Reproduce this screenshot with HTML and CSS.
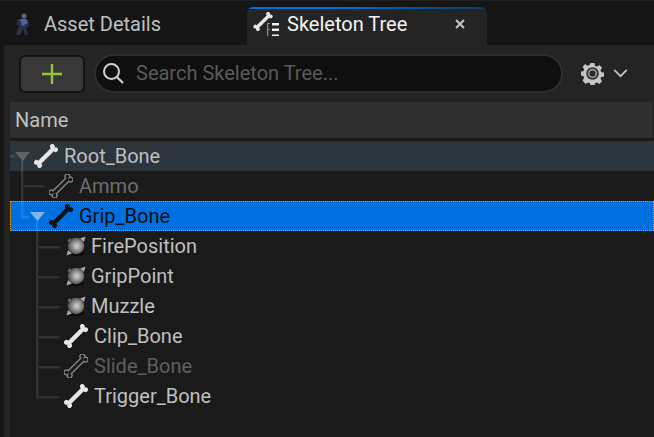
FILE: index.html
```html
<!DOCTYPE html>
<html lang="en">
<head>
<meta charset="utf-8">
<title>Skeleton Tree</title>
<link rel="stylesheet" href="styles.css">
</head>
<body>
<svg class="defs" width="0" height="0" aria-hidden="true">
  <defs>
    <path id="bone" transform="translate(12 12) rotate(-45)" d="M-8.900 -2.200H8.900A2.400 2.400 0 1 1 11.985 0A2.400 2.400 0 1 1 8.900 2.200H-8.900A2.400 2.400 0 1 1 -11.985 0A2.400 2.400 0 1 1 -8.900 -2.200Z"/>
    <radialGradient id="orb" cx="0.550" cy="0.500" r="0.550">
      <stop offset="0" stop-color="#d4d4d4"/>
      <stop offset="0.400" stop-color="#a0a0a0"/>
      <stop offset="0.800" stop-color="#666"/>
      <stop offset="1" stop-color="#484848"/>
    </radialGradient>
    <g id="socket">
      <ellipse cx="10" cy="17.500" rx="8.500" ry="2.500" fill="#0c0c0c"/>
      <circle cx="10" cy="10" r="8.200" fill="url(#orb)"/>
      <path d="M14 2.500l5.500-2-1.500 5.500zM6 17.500l-5.500 2 1.500-5.500z" fill="#a8a8a8"/>
      <path d="M1.500 5l2.500-3 1 2-2 2z" fill="#707070"/>
    </g>
  </defs>
</svg>
<main class="app">
  <nav class="tabs">
    <div class="tab">
      <svg class="tab-figure" viewBox="0 0 16 24" width="16" height="24">
        <circle cx="9" cy="4" r="2.500" fill="#55678f"/>
        <path d="M3 7h10l1 7-3 2 2 7h-3l-2-6-3 6H1l3-10-3-1z" fill="#2b3247"/>
        <path d="M5 7h6l2 4-6 3z" fill="#4a64a4"/>
      </svg>
      <span>Asset Details</span>
    </div>
    <div class="tab tab-active">
      <svg class="tab-bone" viewBox="0 0 27 24" width="27" height="24">
        <use href="#bone" fill="#e6e6e6" transform="translate(.4 -.1) scale(.8)"/>
        <path d="M14 11h1.200v14H14zM14 11h3v1h-3zM14 17h3v1h-3zM14 24h3v1h-3z" fill="#8a8a8a"/>
        <path d="M19 11h7v2.500h-7zM19 16.500h7v2.500h-7zM19 22.500h7v2.500h-7z" fill="#f0f0f0"/>
      </svg>
      <span class="tab-title">Skeleton Tree</span>
      <svg class="tab-close" viewBox="0 0 12 12" width="12" height="12">
        <path d="M2 2l8 8M10 2l-8 8" stroke="#c4c4c4" stroke-width="2" fill="none"/>
      </svg>
    </div>
  </nav>
  <section class="panel">
    <div class="toolbar">
      <button class="add" type="button" aria-label="Add">
        <svg viewBox="0 0 20 20" width="20" height="20"><path d="M10 0v20M0 10h20" stroke="#8fc73e" stroke-width="2.400"/></svg>
      </button>
      <div class="search">
        <svg viewBox="0 0 24 24" width="24" height="24">
          <circle cx="10.500" cy="10.500" r="7.500" stroke="#d0d0d0" stroke-width="2" fill="none"/>
          <path d="M16 16l6 6" stroke="#d0d0d0" stroke-width="2.200"/>
        </svg>
        <span>Search Skeleton Tree...</span>
      </div>
      <div class="settings">
        <svg viewBox="0 0 24 24" width="23" height="23">
          <path d="M10 1h4l.6 3 2 .9 2.600-1.700 2.800 2.800-1.700 2.600.9 2 2.800.4v4l-2.800.6-.9 2 1.700 2.600-2.800 2.800-2.600-1.700-2 .9-.6 2.800h-4l-.6-2.800-2-.9-2.600 1.700L1.600 19.200l1.700-2.600-.9-2-2.400-.6v-4l2.400-.4.900-2-1.700-2.600 2.800-2.800 2.600 1.700 2-.9z" fill="#c4c4c4"/>
          <circle cx="12" cy="12" r="6.500" fill="#2a2a2a"/>
          <circle cx="12" cy="12" r="4" fill="none" stroke="#9a9a9a" stroke-width="1.800"/>
        </svg>
        <svg viewBox="0 0 16 10" width="15" height="9"><path d="M1 1l7 7 7-7" stroke="#c4c4c4" stroke-width="2" fill="none"/></svg>
      </div>
    </div>
    <header class="col-head">Name</header>
    <div class="tree">
      <svg class="wires" width="644" height="290" viewBox="0 0 644 290">
        <g fill="#fff" fill-opacity=".11">
          <rect x="0" y="17" width="5" height="2.500"/>
          <rect x="11" y="22" width="2.500" height="58.500"/>
          <rect x="13.500" y="47" width="21" height="2.500"/>
          <rect x="13.500" y="78" width="6" height="2.500"/>
          <rect x="26" y="83" width="2.500" height="177.500"/>
          <rect x="28.500" y="108" width="21" height="2.500"/>
          <rect x="28.500" y="138" width="21" height="2.500"/>
          <rect x="28.500" y="168" width="21" height="2.500"/>
          <rect x="28.500" y="198" width="21" height="2.500"/>
          <rect x="28.500" y="228" width="21" height="2.500"/>
          <rect x="28.500" y="258" width="21" height="2.500"/>
        </g>
      </svg>
      <div class="row row-root">
        <svg class="caret" viewBox="0 0 15 9" width="15" height="9"><path d="M0 0h15l-7.500 9z"/></svg>
        <svg class="bone" viewBox="0 0 24 24" width="24" height="24"><use href="#bone"/></svg>
        <span>Root_Bone</span>
      </div>
      <div class="row row-l1 muted">
        <svg class="bone outline" viewBox="0 0 24 24" width="24" height="24"><use href="#bone"/></svg>
        <span>Ammo</span>
      </div>
      <div class="row row-selected selected">
        <svg class="caret" viewBox="0 0 15 9" width="15" height="9"><path d="M0 0h15l-7.500 9z"/></svg>
        <svg class="bone" viewBox="0 0 24 24" width="24" height="24"><use href="#bone"/></svg>
        <span>Grip_Bone</span>
      </div>
      <div class="row row-socket">
        <svg class="socket" viewBox="0 0 20 20" width="20" height="20"><use href="#socket"/></svg>
        <span>FirePosition</span>
      </div>
      <div class="row row-socket">
        <svg class="socket" viewBox="0 0 20 20" width="20" height="20"><use href="#socket"/></svg>
        <span>GripPoint</span>
      </div>
      <div class="row row-socket">
        <svg class="socket" viewBox="0 0 20 20" width="20" height="20"><use href="#socket"/></svg>
        <span>Muzzle</span>
      </div>
      <div class="row row-l2">
        <svg class="bone" viewBox="0 0 24 24" width="24" height="24"><use href="#bone"/></svg>
        <span>Clip_Bone</span>
      </div>
      <div class="row row-l2 muted">
        <svg class="bone outline" viewBox="0 0 24 24" width="24" height="24"><use href="#bone"/></svg>
        <span>Slide_Bone</span>
      </div>
      <div class="row row-l2">
        <svg class="bone" viewBox="0 0 24 24" width="24" height="24"><use href="#bone"/></svg>
        <span>Trigger_Bone</span>
      </div>
    </div>
  </section>
</main>
</body>
</html>
```
FILE: styles.css
```css
* { box-sizing: border-box; }
html, body { margin: 0; height: 100%; }
body {
  background: #151515;
  font-family: Roboto, "Liberation Sans", sans-serif;
  overflow: hidden;
}
.defs { position: absolute; }
.app {
  width: 654px;
  height: 437px;
  display: flex;
  flex-direction: column;
  padding-top: 6px;
  border-top: 1px solid #202020;
}
.tabs {
  height: 38px;
  display: flex;
  flex: none;
}
.tab {
  width: 247px;
  display: flex;
  align-items: center;
  padding: 0 0 4px 15px;
  gap: 13px;
  font-size: 20px;
  color: #c0c0c0;
}
.tab-active {
  width: 240px;
  background: linear-gradient(90deg, #0070e0 0%, #0070e0 35%, #123a5c 100%) top / 100% 2px no-repeat, #242424;
  border-radius: 6px 6px 0 0;
  color: #f4f4f4;
  padding-left: 6px;
  gap: 7px;
}
.tab-title { width: 160px; }
.panel {
  flex: 1;
  margin-left: 4px;
  background: #242424;
  display: flex;
  flex-direction: column;
  padding-right: 2px;
  min-height: 0;
}
.toolbar {
  height: 57px;
  flex: none;
  display: flex;
  align-items: center;
  padding-left: 15px;
}
.add {
  width: 66px;
  height: 38px;
  background: #383838;
  border: 2px solid #121212;
  border-radius: 6px;
  padding: 0;
  display: flex;
  align-items: center;
  justify-content: center;
}
.search {
  margin-left: 9px;
  width: 469px;
  height: 39px;
  background: #0f0f0f;
  border: 2px solid #2e2e2e;
  border-radius: 20px;
  display: flex;
  align-items: center;
  padding: 0 0 2px 5px;
  gap: 11px;
  font-size: 20px;
  color: #5a5a5a;
}
.settings {
  margin-left: 18px;
  display: flex;
  align-items: center;
  gap: 9px;
}
.col-head {
  margin-left: 6px;
  height: 36px;
  flex: none;
  background: #2f2f2f;
  color: #c0c0c0;
  font-size: 20px;
  line-height: 36px;
  padding-left: 5px;
}
.tree {
  position: relative;
  flex: 1;
  margin-left: 6px;
  margin-right: -2px;
  background: #1a1a1a;
  padding-top: 3px;
  min-height: 0;
}
.wires { position: absolute; left: 0; top: 0; z-index: 1; }
.row {
  position: relative;
  height: 30px;
  display: flex;
  align-items: center;
  font-size: 20px;
  color: #c0c0c0;
}
.row-root { background: #2c343c; padding-left: 5px; }
.row-l1 { padding-left: 39px; }
.row-selected { padding-left: 20px; }
.row-socket { padding-left: 56px; }
.row-l2 { padding-left: 54px; }
.caret { fill: #5f6468; margin-right: 4px; flex: none; }
.bone { flex: none; margin-right: 6px; fill: #e6e6e6; }
.outline { fill: none; stroke: #8a8a8a; stroke-width: 1.300; }
.muted { color: #6e6e6e; }
.row-l2.muted { color: #5f5f5f; }
.selected {
  background: #0070e0;
  color: #0c0c0c;
  outline: 1px dotted #e09a20;
  outline-offset: -1px;
}
.selected .bone { fill: #101010; }
.selected .caret { fill: #7fb4ea; }
.socket { flex: none; margin-right: 5px; }
```
